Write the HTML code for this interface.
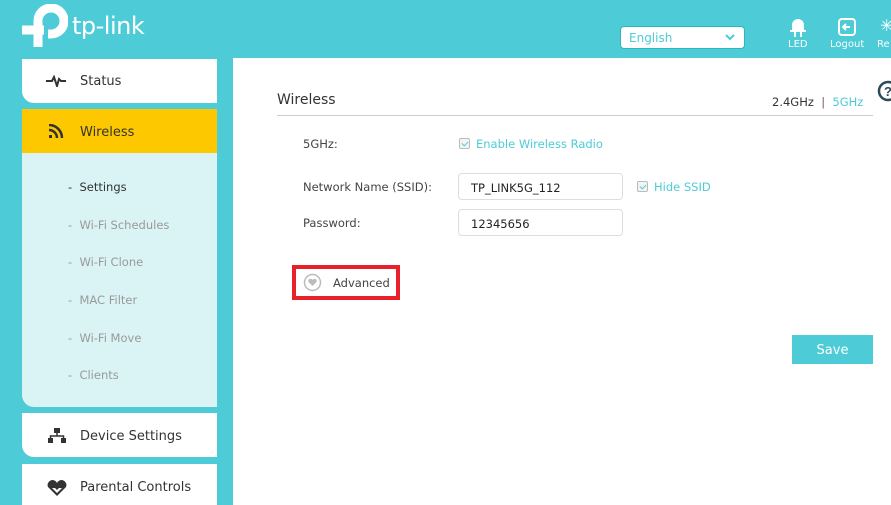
<!DOCTYPE html>
<html><head><style>
*{margin:0;padding:0;box-sizing:border-box}
body{width:891px;height:505px;overflow:hidden;background:#4dcbd6;font-family:Verdana,"DejaVu Sans","Liberation Sans",sans-serif;position:relative;color:#333}
.abs{position:absolute}
.menu{position:absolute;left:22px;width:195px;background:#fff;font-size:13px;color:#333;border-bottom-left-radius:12px}
.menu span{position:absolute;left:58px}
.sub{position:absolute;left:22px;top:153px;width:195px;height:254px;background:#daf4f6;border-bottom-left-radius:12px;font-size:11.5px;color:#999}
.sub div{position:absolute;left:46px}
.lbl{position:absolute;font-size:11.5px;color:#444}
.inp{position:absolute;left:458px;width:165px;height:27px;border:1px solid #ddd;border-radius:4px;font-size:11.5px;color:#222;padding:7px 0 0 12px}
.cb{position:absolute;width:11px;height:11px;border:1px solid #bbb;border-radius:2px;background:#f4f4f4}
.cb:after{content:"";position:absolute;left:3px;top:1px;width:3px;height:5px;border:solid #4dcbd6;border-width:0 1.5px 1.5px 0;transform:rotate(45deg)}
.lnk{position:absolute;font-size:11.5px;color:#4dcbd6}
</style></head><body>
<!-- logo -->
<svg class="abs" style="left:22px;top:4px" width="46" height="44" viewBox="0 0 46 44">
<path d="M0 26H22M16 26V43M16 26V17A13 13 0 1 1 29 30H26" stroke="#fff" stroke-width="9" fill="none"/>
</svg>
<div class="abs" style="left:72px;top:12px;font-size:24px;color:#fff;font-family:'DejaVu Sans',sans-serif;letter-spacing:-0.5px">tp-link</div>
<!-- language -->
<div class="abs" style="left:620px;top:26px;width:125px;height:23px;background:#fff;border:1px solid #2fb5c0;border-radius:4px;font-size:12px;color:#4dcbd6;padding:4px 0 0 8px">English</div>
<svg class="abs" style="left:725px;top:34px" width="10" height="7"><path d="M1 1L5 5L9 1" stroke="#4dcbd6" stroke-width="2" fill="none"/></svg>
<!-- LED -->
<svg class="abs" style="left:790px;top:17px" width="16" height="20"><path d="M2 14V8A6 6 0 0 1 14 8V14Z" fill="#fff"/><rect x="0" y="13" width="16" height="2" fill="#fff"/><rect x="4" y="15" width="2" height="5" fill="#fff"/><rect x="10" y="15" width="2" height="5" fill="#fff"/></svg>
<div class="abs" style="left:788px;top:39px;font-size:10px;color:#fff">LED</div>
<svg class="abs" style="left:838px;top:18px" width="18" height="18"><rect x="1" y="1" width="16" height="16" rx="3" fill="none" stroke="#fff" stroke-width="2"/><path d="M12 9H5M8 6L5 9L8 12" stroke="#fff" stroke-width="2" fill="none"/></svg>
<div class="abs" style="left:830px;top:39px;font-size:10px;color:#fff">Logout</div>
<div class="abs" style="left:880px;top:16px;font-size:16px;color:#fff">✳</div>
<div class="abs" style="left:877px;top:39px;font-size:10px;color:#fff">Re</div>
<!-- sidebar -->
<div class="menu" style="top:59px;height:44px"><svg class="abs" style="left:24px;top:16px" width="20" height="12"><path d="M0 6H6L8 2L11 11L13 4L15 6H20" stroke="#333" stroke-width="2" fill="none"/></svg><span style="top:15px">Status</span></div>
<div class="menu" style="top:109px;height:44px;background:#fdc800;border-bottom-left-radius:0"><svg class="abs" style="left:27px;top:15px" width="15" height="15"><rect x="0" y="11" width="3" height="3" fill="#333"/><path d="M0 6A8 8 0 0 1 8 14M0 1A13 13 0 0 1 13 14" stroke="#333" stroke-width="2.5" fill="none"/></svg><span style="top:16px">Wireless</span></div>
<div class="sub">
<div style="top:27px;color:#333">-&nbsp; Settings</div>
<div style="top:65px">-&nbsp; Wi-Fi Schedules</div>
<div style="top:102px">-&nbsp; Wi-Fi Clone</div>
<div style="top:140px">-&nbsp; MAC Filter</div>
<div style="top:178px">-&nbsp; Wi-Fi Move</div>
<div style="top:215px">-&nbsp; Clients</div>
</div>
<div class="menu" style="top:413px;height:44px"><svg class="abs" style="left:26px;top:15px" width="18" height="15"><rect x="6" y="0" width="6" height="5" fill="#333"/><rect x="0" y="10" width="5" height="5" fill="#333"/><rect x="13" y="10" width="5" height="5" fill="#333"/><path d="M9 5V8M2.5 10V8H15.5V10" stroke="#333" stroke-width="1.5" fill="none"/></svg><span style="top:16px">Device Settings</span></div>
<div class="menu" style="top:464px;height:41px;border-radius:0"><svg class="abs" style="left:25px;top:16px" width="20" height="16"><path d="M10 16L1 7A4.5 4.5 0 0 1 10 3A4.5 4.5 0 0 1 19 7Z" fill="#333"/><path d="M5 8H8L10 10L12 8H15L10 13Z" fill="#fff"/></svg><span style="top:16px">Parental Controls</span></div>
<!-- content -->
<div class="abs" style="left:233px;top:58px;width:658px;height:447px;background:#fff"></div>
<div class="abs" style="left:277px;top:92px;font-size:14px;color:#333">Wireless</div>
<div class="abs" style="left:772px;top:95px;font-size:11.5px;color:#333">2.4GHz &nbsp;<span style="color:#8a4a6a">|</span>&nbsp; <span style="color:#4dcbd6">5GHz</span></div>
<div class="abs" style="left:277px;top:115px;width:596px;height:1px;background:#ccc"></div>
<svg class="abs" style="left:877px;top:80px" width="20" height="22"><circle cx="11" cy="11" r="9" fill="none" stroke="#2a4a5a" stroke-width="2.5"/><text x="11" y="16" font-size="13" font-weight="bold" text-anchor="middle" fill="#2a4a5a" font-family="Liberation Sans">?</text></svg>
<div class="lbl" style="left:303px;top:137px">5GHz:</div>
<div class="cb" style="left:459px;top:138px"></div>
<div class="lnk" style="left:476px;top:137px">Enable Wireless Radio</div>
<div class="lbl" style="left:303px;top:180px">Network Name (SSID):</div>
<div class="inp" style="top:173px">TP_LINK5G_112</div>
<div class="cb" style="left:637px;top:181px"></div>
<div class="lnk" style="left:654px;top:180px">Hide SSID</div>
<div class="lbl" style="left:303px;top:216px">Password:</div>
<div class="inp" style="top:209px">12345656</div>
<div class="abs" style="left:292px;top:265px;width:108px;height:35px;border:4px solid #e8202a"></div>
<svg class="abs" style="left:303px;top:273px" width="19" height="19"><circle cx="9.5" cy="9.5" r="8" fill="#fff" stroke="#bbb" stroke-width="1.5"/><path d="M9.5 13L5.5 9A2 2 0 0 1 9.5 7A2 2 0 0 1 13.5 9Z" fill="#bbb"/></svg>
<div class="abs" style="left:333px;top:276px;font-size:11.5px;color:#444">Advanced</div>
<div class="abs" style="left:792px;top:335px;width:81px;height:29px;background:#4dcbd6;color:#fff;font-size:13px;text-align:center;line-height:31px">Save</div>
</body></html>
